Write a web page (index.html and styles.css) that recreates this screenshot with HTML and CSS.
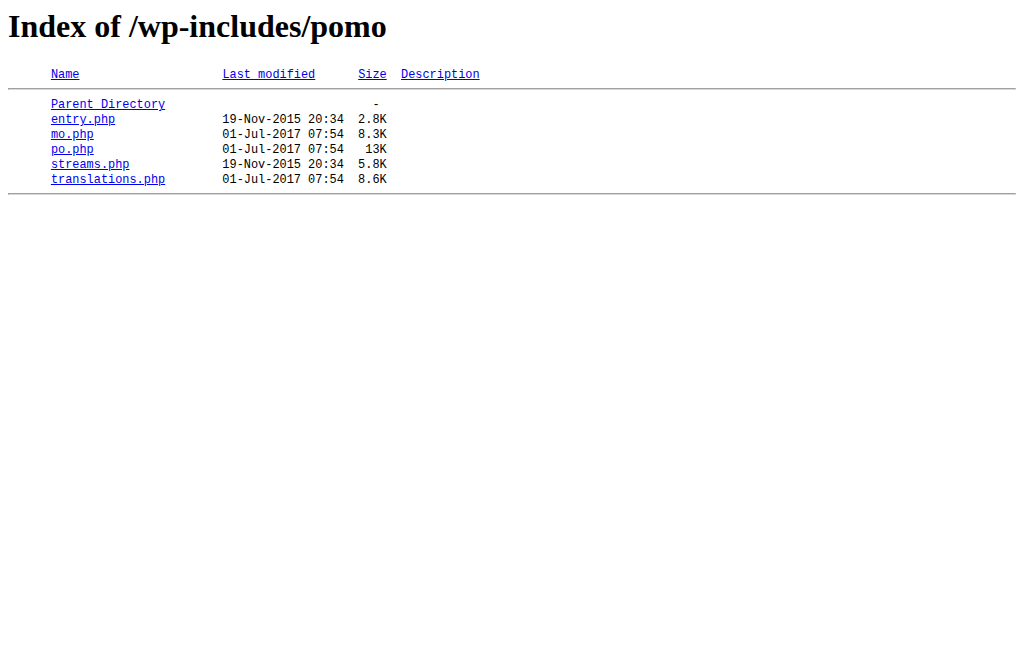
FILE: index.html
```html
<!DOCTYPE html>
<html>
<head>
<meta charset="utf-8">
<title>Index of /wp-includes/pomo</title>
<link rel="stylesheet" href="styles.css">
</head>
<body class="page">
<h1 class="title">Index of /wp-includes/pomo</h1>
<pre class="listing">      <a href="#">Name</a>                    <a href="#">Last modified</a>      <a href="#">Size</a>  <a href="#">Description</a><hr class="rule">      <a href="#">Parent Directory</a>                             -   
      <a href="#">entry.php</a>               19-Nov-2015 20:34  2.8K  
      <a href="#">mo.php</a>                  01-Jul-2017 07:54  8.3K  
      <a href="#">po.php</a>                  01-Jul-2017 07:54   13K  
      <a href="#">streams.php</a>             19-Nov-2015 20:34  5.8K  
      <a href="#">translations.php</a>        01-Jul-2017 07:54  8.6K  
<hr class="rule"></pre>
</body>
</html>
```

FILE: styles.css
```css
.page {
  margin: 8px;
  background: #ffffff;
  color: #000000;
  font-family: "Liberation Serif", "Times New Roman", serif;
}

.title {
  margin: 0 0 21.44px 0;
  font-size: 32px;
  font-weight: bold;
  line-height: 37px;
}

.listing {
  margin: 13px 0;
  padding-top: 2px;
  font-family: "Liberation Mono", "Courier New", monospace;
  font-size: 11.92px;
  line-height: 15px;
}

.listing a {
  color: #0000ee;
  text-decoration: underline;
}

.rule {
  margin: 4.5px 0 8.5px 0;
  border-style: solid;
  border-width: 1px;
  border-color: #a0a0a0 #d8d8d8 #d8d8d8 #a0a0a0;
  height: 0;
}
```
